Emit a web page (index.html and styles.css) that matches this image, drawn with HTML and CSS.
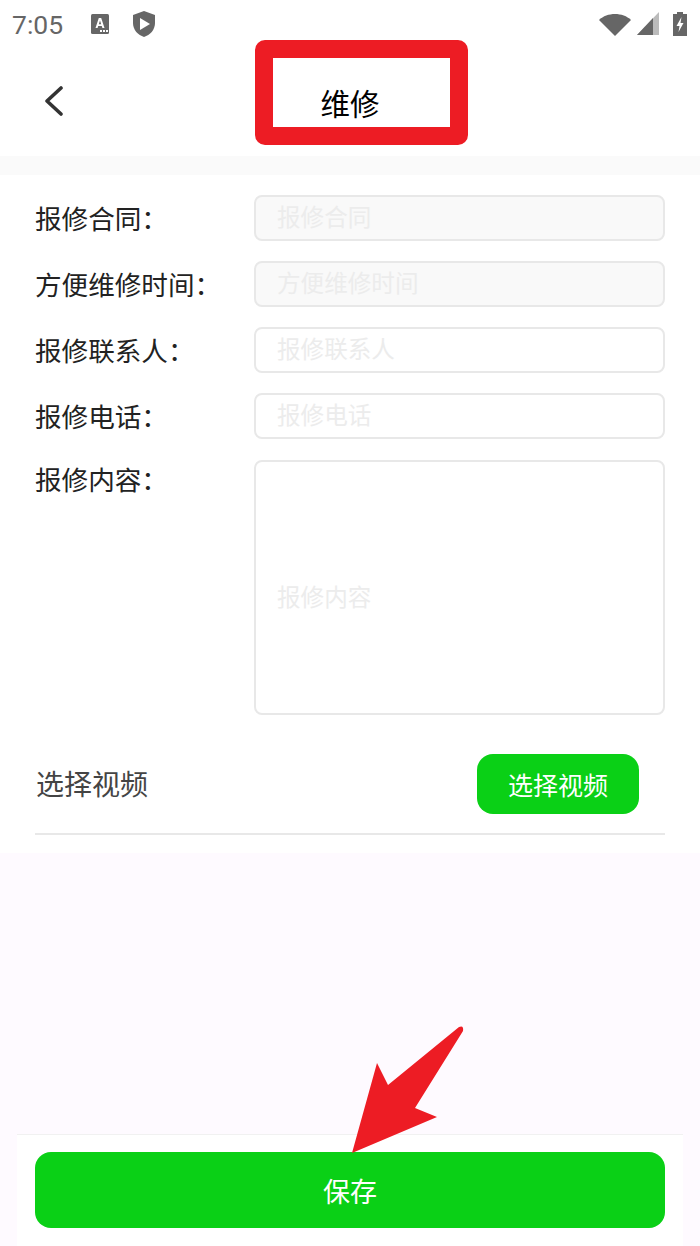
FILE: index.html
```html
<!DOCTYPE html>
<html lang="zh-CN">
<head>
  <meta charset="UTF-8">
  <title>维修</title>
  <link rel="stylesheet" href="styles.css">
</head>
<body>

<div class="page">
  <!-- status bar -->
  <div class="status-bar">
    <span class="time">7:05</span>
    <svg class="icon-a" width="20" height="22" viewBox="0 0 20 22">
      <rect x="1" y="1" width="18" height="20" rx="1.5" fill="#666"/>
      <path d="M5.5 15 L8.8 5 H11.2 L14.5 15 H12.4 L11.8 13 H8.2 L7.6 15 Z M8.8 11.2 H11.2 L10 7.5 Z" fill="#fff" fill-rule="evenodd"/>
      <rect x="10" y="17" width="2" height="2" fill="#fff"/>
      <rect x="13" y="17" width="2" height="2" fill="#fff"/>
      <rect x="16" y="17" width="2" height="2" fill="#fff"/>
    </svg>
    <svg class="icon-shield" width="24" height="28" viewBox="0 0 24 28">
      <path d="M12 1 L23 5 V13 C23 20 18 25 12 27 C6 25 1 20 1 13 V5 Z" fill="#666"/>
      <path d="M8 8 L18 14 L8 20 Z" fill="#fff"/>
    </svg>
    <span class="status-right">
      <svg width="32" height="24" viewBox="0 0 32 24">
        <path d="M0 8 C8 0 24 0 32 8 L16 24 Z" fill="#666"/>
      </svg>
      <svg class="icon-signal" width="22" height="24" viewBox="0 0 22 24">
        <path d="M22 0 V23 H0 Z" fill="#bbb"/>
        <path d="M16 6 V23 H0 Z" fill="#666"/>
      </svg>
      <svg class="icon-battery" width="14" height="24" viewBox="0 0 14 24">
        <path d="M4 0 H10 V2 H14 V24 H0 V2 H4 Z" fill="#666"/>
        <path d="M8.5 5 L3.5 14 H6.5 L5.5 20 L10.5 11 H7.5 Z" fill="#fff"/>
      </svg>
    </span>
  </div>

  <!-- header -->
  <div class="header">
    <svg class="back" width="20" height="30" viewBox="0 0 20 30">
      <path d="M17 2 L3 15 L17 28" fill="none" stroke="#333" stroke-width="3.6" stroke-linecap="round" stroke-linejoin="round"/>
    </svg>
    <h1 class="title">维修</h1>
  </div>
  <div class="band"></div>

  <!-- form -->
  <div class="form">
    <div class="form-row">
      <label>报修合同：</label>
      <div class="field disabled">报修合同</div>
    </div>
    <div class="form-row">
      <label>方便维修时间：</label>
      <div class="field disabled">方便维修时间</div>
    </div>
    <div class="form-row">
      <label>报修联系人：</label>
      <div class="field">报修联系人</div>
    </div>
    <div class="form-row">
      <label>报修电话：</label>
      <div class="field">报修电话</div>
    </div>
    <div class="form-row form-row-area">
      <label>报修内容：</label>
      <div class="field area">报修内容</div>
    </div>
  </div>

  <div class="video-row">
    <span class="video-label">选择视频</span>
    <button class="video-btn">选择视频</button>
  </div>

  <div class="spacer"></div>

  <div class="footer">
    <button class="save-btn">保存</button>
  </div>

  <!-- red annotations on top of the screenshot -->
  <div class="mark-box"></div>
  <svg class="mark-arrow" width="120" height="135" viewBox="345 1022 120 135">
    <path d="M352 1153 L377 1063 L388 1085 L459 1027 Q464 1025 463 1031 L415 1108 L437 1117 Z" fill="#ed1c24"/>
  </svg>
</div>

</body>
</html>
```

FILE: styles.css
```css
* {
  box-sizing: border-box;
}

html, body {
  margin: 0;
  height: 100%;
}

body {
  font-family: "Noto Sans CJK SC", "Noto Sans", sans-serif;
  background: #fff;
  color: #333;
}

.page {
  position: relative;
  width: 700px;
  height: 1246px;
  display: flex;
  flex-direction: column;
  overflow: hidden;
}

.status-bar {
  height: 48px;
  display: flex;
  align-items: center;
  padding: 0 12px;
  color: #666;
}

.time {
  font-family: Roboto, sans-serif;
  font-size: 26.5px;
  width: 78px;
}

.icon-a {
  margin-right: 22px;
}

.status-right {
  margin-left: auto;
  display: flex;
  align-items: center;
  gap: 4px;
}

.icon-signal {
  margin-left: 2px;
}

.icon-battery {
  margin-left: 10px;
  margin-right: 1px;
}

.header {
  height: 108px;
  display: flex;
  align-items: center;
  justify-content: center;
  position: relative;
}

.back {
  position: absolute;
  left: 44px;
  top: 38px;
}

.title {
  margin: 0;
  font-size: 29.5px;
  line-height: 108px;
  font-weight: 400;
  color: #000;
}

.band {
  height: 19px;
  background: #fafafa;
}

.form {
  padding: 20px 35px 0 35px;
  display: flex;
  flex-direction: column;
  gap: 20px;
}

.form-row {
  display: flex;
}

.form-row label {
  width: 219px;
  font-size: 26.6px;
  line-height: 46px;
  color: #222;
}

.field {
  flex: 1;
  height: 46px;
  border: 2px solid #e8e8e8;
  border-radius: 8px;
  padding: 0 21px;
  font-size: 23.6px;
  line-height: 39px;
  color: #ececec;
}

.field.disabled {
  background: #f9f9f9;
}

.form-row-area {
  margin-top: 1px;
}

.form-row-area label {
  line-height: 38px;
}

.field.area {
  height: 255px;
  line-height: 268px;
}

.video-row {
  margin: 39px 35px 0;
  padding: 0 26px 19px 1px;
  height: 81px;
  display: flex;
  align-items: flex-start;
  justify-content: space-between;
  border-bottom: 2px solid #e8e8e8;
}

.video-label {
  font-size: 28px;
  line-height: 58px;
  color: #444;
}

.video-btn {
  width: 162px;
  height: 60px;
  border: none;
  border-radius: 16px;
  background: #0ad016;
  color: #fff;
  font-family: inherit;
  font-size: 25px;
}

.spacer {
  flex: 1;
  margin-top: 18px;
  background: #fefaff;
}

.footer {
  position: absolute;
  left: 17px;
  right: 17px;
  bottom: 0;
  height: 112px;
  padding: 17px 18px 0;
  background: #fff;
  border-top: 1px solid #f1f1f1;
}

.save-btn {
  display: block;
  width: 100%;
  height: 76px;
  border: none;
  border-radius: 16px;
  background: #0ad016;
  color: #fff;
  font-family: inherit;
  font-size: 27px;
}

.mark-box {
  position: absolute;
  left: 255px;
  top: 40px;
  width: 213px;
  height: 105px;
  border: 18px solid #ed1c24;
  border-radius: 10px;
}

.mark-arrow {
  position: absolute;
  left: 345px;
  top: 1022px;
}
```
